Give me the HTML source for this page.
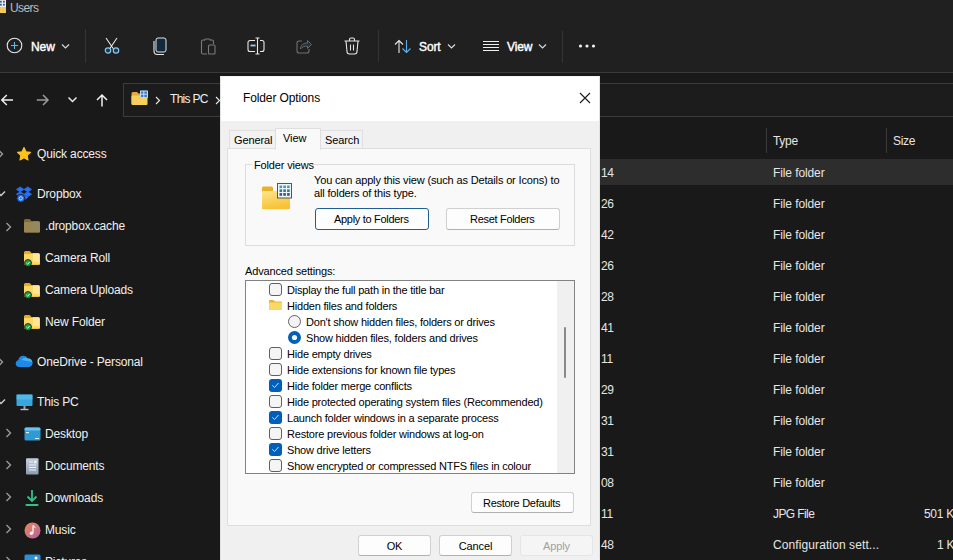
<!DOCTYPE html>
<html><head><meta charset="utf-8">
<style>
*{margin:0;padding:0;box-sizing:border-box}
html,body{width:953px;height:560px;overflow:hidden;background:#191919;font-family:"Liberation Sans",sans-serif}
.a{position:absolute;white-space:nowrap}
#top{position:absolute;left:0;top:0;width:953px;height:72px;background:#202020}
#topline{position:absolute;left:0;top:72px;width:953px;height:1px;background:#3a3a3a}
.wt{color:#ffffff;font-size:12px}
.sep{position:absolute;width:1px;background:#343434}
.nav{position:absolute;left:0;top:73px;width:953px;height:487px;background:#191919}
.side{color:#f0f0f0;font-size:12px;letter-spacing:-0.15px}
.row{position:absolute;left:600px;width:353px;height:26px}
.ct{color:#e6e6e6;font-size:12px}
/* dialog */
#dlg{position:absolute;left:220px;top:76px;width:380px;height:490px;background:#f0f0f0;border:1px solid #8a8a8a;border-bottom:none}
#dtitle{position:absolute;left:0;top:0;width:378px;height:45px;background:#ffffff}
.dt{color:#000;font-size:11px;letter-spacing:-0.15px}
.btn{position:absolute;background:#fdfdfd;border:1px solid #d0d0d0;border-bottom-color:#b5b5b5;border-radius:3px;font-size:11px;color:#000;text-align:center;letter-spacing:-0.15px}
.cb{position:absolute;width:13px;height:13px;border:1px solid #606060;border-radius:3px;background:#f4f4f4}
.cbc{background:#005fb8;border-color:#005fb8}
.li{position:absolute;font-size:11px;color:#000;letter-spacing:-0.2px;white-space:nowrap}
</style></head><body>
<div id="top"></div>
<div id="topline"></div>

<!-- title -->
<svg class="a" style="left:0;top:0" width="8" height="14" viewBox="0 0 8 14">
  <rect x="-6" y="7" width="12" height="6" fill="#f5c85a"/>
  <rect x="-2" y="0" width="8" height="7" fill="#e6edf4"/>
  <rect x="0" y="0.8" width="1.8" height="1.8" fill="#3f5f86"/><rect x="3" y="0.8" width="1.8" height="1.8" fill="#3f5f86"/>
  <rect x="0" y="3.8" width="1.8" height="1.8" fill="#3f5f86"/><rect x="3" y="3.8" width="1.8" height="1.8" fill="#3f5f86"/>
</svg>
<div class="a" style="left:10px;top:1px;font-size:12px;color:#bdbdbd;line-height:14px;letter-spacing:-0.6px">Users</div>

<!-- toolbar -->
<svg class="a" style="left:6px;top:37px" width="18" height="18" viewBox="0 0 18 18">
  <circle cx="8.5" cy="8.5" r="7.3" fill="none" stroke="#e8e8e8" stroke-width="1.1"/>
  <path d="M8.5 5v7M5 8.5h7" stroke="#60b8e8" stroke-width="1.1"/>
</svg>
<div class="a wt" style="left:31px;top:40px;line-height:14px;font-size:12px;letter-spacing:-0.1px;-webkit-text-stroke:0.4px #fff">New</div>
<svg class="a" style="left:61px;top:43px" width="9" height="6" viewBox="0 0 9 6"><path d="M1 1.5l3.5 3.5L8 1.5" fill="none" stroke="#d8d8d8" stroke-width="1.2"/></svg>
<div class="sep" style="left:85px;top:29px;height:34px"></div>

<!-- scissors -->
<svg class="a" style="left:103px;top:37px" width="18" height="18" viewBox="0 0 18 18">
  <path d="M3 1l7.5 11M14 1L6.5 12" stroke="#e8e8e8" stroke-width="1.1" fill="none"/>
  <circle cx="5" cy="13.5" r="2.7" fill="#173a55" stroke="#8cc6ea" stroke-width="1.2"/>
  <circle cx="13" cy="13.5" r="2.7" fill="#173a55" stroke="#8cc6ea" stroke-width="1.2"/>
</svg>
<!-- copy -->
<svg class="a" style="left:152px;top:37px" width="17" height="19" viewBox="0 0 17 19">
  <rect x="4" y="1" width="10" height="14" rx="2" fill="#14293a" stroke="#dce8f0" stroke-width="1"/>
  <path d="M2 4v10a3.5 3.5 0 0 0 3.5 3.5H12" fill="none" stroke="#e8e8e8" stroke-width="1.1"/>
</svg>
<!-- paste (dim) -->
<svg class="a" style="left:200px;top:37px" width="17" height="19" viewBox="0 0 17 19">
  <path d="M5 3H3a1.5 1.5 0 0 0-1.5 1.5v11A1.5 1.5 0 0 0 3 17h4" fill="none" stroke="#7a7a7a" stroke-width="1.1"/>
  <path d="M5 3.5a1 1 0 0 1 1-1.5h3a1 1 0 0 1 1 1.5" fill="none" stroke="#7a7a7a" stroke-width="1.1"/>
  <path d="M10 3h2a1.5 1.5 0 0 1 1.5 1.5V7" fill="none" stroke="#7a7a7a" stroke-width="1.1"/>
  <rect x="8.5" y="8" width="6.5" height="9" rx="1" fill="none" stroke="#7a7a7a" stroke-width="1.1"/>
</svg>
<!-- rename -->
<svg class="a" style="left:247px;top:37px" width="19" height="18" viewBox="0 0 19 18">
  <path d="M8 3.5H3a2 2 0 0 0-2 2v7a2 2 0 0 0 2 2h5M13 3.5h2a2 2 0 0 1 2 2v7a2 2 0 0 1-2 2h-2" fill="none" stroke="#e8e8e8" stroke-width="1.1"/>
  <path d="M3.5 8.5h5" stroke="#9ccfee" stroke-width="1.8"/>
  <path d="M10.5 1v16M8.5 1h4M8.5 17h4" stroke="#dfe9f0" stroke-width="1.1" fill="none"/>
  
</svg>
<!-- share dim -->
<svg class="a" style="left:296px;top:38px" width="17" height="16" viewBox="0 0 17 16">
  <path d="M6 3H3a2 2 0 0 0-2 2v8a2 2 0 0 0 2 2h8a2 2 0 0 0 2-2v-2" fill="none" stroke="#6f6f6f" stroke-width="1.1"/>
  <path d="M4.5 11c0-4 3-6 7-6V2.5l4 4-4 4V8c-3 0-5.5 1-7 3z" fill="#22303a" stroke="#5f6a72" stroke-width="1"/>
</svg>
<!-- trash -->
<svg class="a" style="left:343px;top:37px" width="18" height="18" viewBox="0 0 18 18">
  <path d="M1.5 4h15M6.5 4V2.5a1.5 1.5 0 0 1 1.5-1.5h2a1.5 1.5 0 0 1 1.5 1.5V4M3 4l1 10.5A2.5 2.5 0 0 0 6.5 17h5a2.5 2.5 0 0 0 2.5-2.5L15 4M7.5 7.5v6M10.5 7.5v6" fill="none" stroke="#e8e8e8" stroke-width="1.1"/>
</svg>
<div class="sep" style="left:378px;top:30px;height:32px"></div>
<!-- sort -->
<svg class="a" style="left:394px;top:39px" width="18" height="15" viewBox="0 0 18 15">
  <path d="M5 14V1.5M1 5.5l4-4 4 4" fill="none" stroke="#e8e8e8" stroke-width="1.1"/>
  <path d="M12.5 1v12.5M8.5 9.5l4 4 4-4" fill="none" stroke="#5fb2e6" stroke-width="1.1"/>
</svg>
<div class="a wt" style="left:419px;top:40px;line-height:14px;letter-spacing:-0.1px;-webkit-text-stroke:0.4px #fff">Sort</div>
<svg class="a" style="left:447px;top:43px" width="9" height="6" viewBox="0 0 9 6"><path d="M1 1.5l3.5 3.5L8 1.5" fill="none" stroke="#d8d8d8" stroke-width="1.2"/></svg>
<!-- view -->
<svg class="a" style="left:482px;top:39px" width="18" height="15" viewBox="0 0 18 15">
  <path d="M1 2.5h16M1 5.5h16M1 8.5h16M1 11.5h16" stroke="#f0f0f0" stroke-width="1"/>
</svg>
<div class="a wt" style="left:507px;top:40px;line-height:14px;letter-spacing:-0.1px;-webkit-text-stroke:0.4px #fff">View</div>
<svg class="a" style="left:538px;top:43px" width="9" height="6" viewBox="0 0 9 6"><path d="M1 1.5l3.5 3.5L8 1.5" fill="none" stroke="#d8d8d8" stroke-width="1.2"/></svg>
<div class="sep" style="left:562px;top:31px;height:32px"></div>
<svg class="a" style="left:578px;top:43px" width="18" height="6" viewBox="0 0 18 6">
  <circle cx="2.5" cy="3" r="1.6" fill="#f0f0f0"/><circle cx="9" cy="3" r="1.6" fill="#f0f0f0"/><circle cx="15.5" cy="3" r="1.6" fill="#f0f0f0"/>
</svg>

<!-- nav row -->
<div class="nav"></div>
<svg class="a" style="left:0;top:93px" width="15" height="14" viewBox="0 0 15 14"><path d="M13 7H1.8M6.8 2L1.8 7l5 5" fill="none" stroke="#f0f0f0" stroke-width="1.5"/></svg>
<svg class="a" style="left:35px;top:93px" width="15" height="14" viewBox="0 0 15 14"><path d="M1.8 7H13M8 2l5 5-5 5" fill="none" stroke="#9a9a9a" stroke-width="1.5"/></svg>
<svg class="a" style="left:67px;top:96px" width="11" height="7" viewBox="0 0 11 7"><path d="M1.5 1.5l4 4 4-4" fill="none" stroke="#e8e8e8" stroke-width="1.5"/></svg>
<svg class="a" style="left:95px;top:93px" width="14" height="15" viewBox="0 0 14 15"><path d="M7 13.5V2M2 7l5-5 5 5" fill="none" stroke="#f0f0f0" stroke-width="1.5"/></svg>
<div class="a" style="left:123px;top:83px;width:840px;height:34px;border:1px solid #3c3c3c;background:#1c1c1c"></div>
<svg class="a" style="left:131px;top:90px" width="18" height="16" viewBox="0 0 18 16">
  <path d="M0.5 3.5a1.5 1.5 0 0 1 1.5-1.5h4l1.5 1.5H9V14.5H2a1.5 1.5 0 0 1-1.5-1.5z" fill="#e8a93a"/>
  <rect x="0.5" y="5.5" width="16" height="9.5" rx="1" fill="#f7cf5d"/>
  <rect x="9" y="0.5" width="8" height="7.5" fill="#3d7dc4"/>
  <path d="M9.5 1h7v6.5h-7zM12.8 1v6.5M9.5 4.2h7" fill="none" stroke="#dceeff" stroke-width="0.8"/>
</svg>
<svg class="a" style="left:155px;top:96px" width="6" height="9" viewBox="0 0 6 9"><path d="M1 1l3.5 3.5L1 8" fill="none" stroke="#e8e8e8" stroke-width="1.1"/></svg>
<div class="a" style="left:170px;top:92px;font-size:12px;color:#f0f0f0;line-height:14px;letter-spacing:-0.7px">This PC</div>
<svg class="a" style="left:215px;top:96px" width="6" height="9" viewBox="0 0 6 9"><path d="M1 1l3.5 3.5L1 8" fill="none" stroke="#e8e8e8" stroke-width="1.1"/></svg>

<!-- column header -->
<div class="sep" style="left:766px;top:128px;height:25px;background:#3a3a3a"></div>
<div class="sep" style="left:886px;top:128px;height:25px;background:#3a3a3a"></div>
<div class="a ct" style="left:773px;top:134px;line-height:14px;letter-spacing:-0.3px">Type</div>
<div class="a ct" style="left:893px;top:134px;line-height:14px;letter-spacing:-0.3px">Size</div>

<!-- rows -->
<div class="row" style="top:159px;background:#2d2d2d"></div>
<div class="a ct" style="left:601px;top:166px;line-height:14px;letter-spacing:-0.3px">14</div>
<div class="a ct" style="left:773px;top:166px;line-height:14px;letter-spacing:-0.1px">File folder</div>
<div class="a ct" style="left:601px;top:197px;line-height:14px;letter-spacing:-0.3px">26</div>
<div class="a ct" style="left:773px;top:197px;line-height:14px;letter-spacing:-0.1px">File folder</div>
<div class="a ct" style="left:601px;top:228px;line-height:14px;letter-spacing:-0.3px">42</div>
<div class="a ct" style="left:773px;top:228px;line-height:14px;letter-spacing:-0.1px">File folder</div>
<div class="a ct" style="left:601px;top:259px;line-height:14px;letter-spacing:-0.3px">26</div>
<div class="a ct" style="left:773px;top:259px;line-height:14px;letter-spacing:-0.1px">File folder</div>
<div class="a ct" style="left:601px;top:290px;line-height:14px;letter-spacing:-0.3px">28</div>
<div class="a ct" style="left:773px;top:290px;line-height:14px;letter-spacing:-0.1px">File folder</div>
<div class="a ct" style="left:601px;top:321px;line-height:14px;letter-spacing:-0.3px">41</div>
<div class="a ct" style="left:773px;top:321px;line-height:14px;letter-spacing:-0.1px">File folder</div>
<div class="a ct" style="left:601px;top:352px;line-height:14px;letter-spacing:-0.3px">11</div>
<div class="a ct" style="left:773px;top:352px;line-height:14px;letter-spacing:-0.1px">File folder</div>
<div class="a ct" style="left:601px;top:383px;line-height:14px;letter-spacing:-0.3px">29</div>
<div class="a ct" style="left:773px;top:383px;line-height:14px;letter-spacing:-0.1px">File folder</div>
<div class="a ct" style="left:601px;top:414px;line-height:14px;letter-spacing:-0.3px">31</div>
<div class="a ct" style="left:773px;top:414px;line-height:14px;letter-spacing:-0.1px">File folder</div>
<div class="a ct" style="left:601px;top:445px;line-height:14px;letter-spacing:-0.3px">31</div>
<div class="a ct" style="left:773px;top:445px;line-height:14px;letter-spacing:-0.1px">File folder</div>
<div class="a ct" style="left:601px;top:476px;line-height:14px;letter-spacing:-0.3px">08</div>
<div class="a ct" style="left:773px;top:476px;line-height:14px;letter-spacing:-0.1px">File folder</div>
<div class="a ct" style="left:601px;top:507px;line-height:14px;letter-spacing:-0.3px">11</div>
<div class="a ct" style="left:773px;top:507px;line-height:14px;letter-spacing:-0.6px">JPG File</div>
<div class="a ct" style="left:924px;top:507px;line-height:14px;letter-spacing:-0.3px">501 K</div>
<div class="a ct" style="left:601px;top:538px;line-height:14px;letter-spacing:-0.3px">48</div>
<div class="a ct" style="left:773px;top:538px;line-height:14px;letter-spacing:0.1px">Configuration sett...</div>
<div class="a ct" style="left:937px;top:538px;line-height:14px;letter-spacing:-0.3px">1 K</div>

<!-- sidebar -->
<svg class="a" style="left:-3px;top:149px" width="7" height="10" viewBox="0 0 7 10"><path d="M1.5 1l4 4-4 4" fill="none" stroke="#9a9a9a" stroke-width="1.4"/></svg>
<svg class="a" style="left:16px;top:146px" width="16" height="16" viewBox="0 0 16 16"><path d="M8 1.6l2 4.1 4.5.6-3.3 3.1.8 4.5L8 11.8l-4 2.1.8-4.5L1.5 6.3 6 5.7z" fill="#fbc31c" stroke="#fbc31c" stroke-width="1.1" stroke-linejoin="round"/></svg>
<div class="a side" style="left:37px;top:147px;line-height:14px;">Quick access</div>
<svg class="a" style="left:-4px;top:190px" width="10" height="7" viewBox="0 0 10 7"><path d="M1 1.5l4 4 4-4" fill="none" stroke="#cfcfcf" stroke-width="1.4"/></svg>
<svg class="a" style="left:16px;top:186px" width="17" height="17" viewBox="0 0 17 17"><path d="M4.2 1L0.5 3.4 4.2 5.8 7.9 3.4zM11.8 1L8.1 3.4l3.7 2.4 3.7-2.4zM0.5 8.2l3.7 2.4 3.7-2.4-3.7-2.4zM11.8 5.8L8.1 8.2l3.7 2.4 3.7-2.4zM4.2 11.4l3.8 2.4 3.8-2.4L8 9z" fill="#2a6ff0" stroke="#2a6ff0" stroke-width="0.9" stroke-linejoin="round"/><circle cx="4.8" cy="12.3" r="4" fill="#2a6ff0" stroke="#191919" stroke-width="0.8"/><circle cx="4.8" cy="12.3" r="1.6" fill="none" stroke="#bcd6ff" stroke-width="1"/></svg>
<div class="a side" style="left:37px;top:187px;line-height:14px;">Dropbox</div>
<svg class="a" style="left:5px;top:222px" width="7" height="10" viewBox="0 0 7 10"><path d="M1.5 1l4 4-4 4" fill="none" stroke="#9a9a9a" stroke-width="1.4"/></svg>
<svg class="a" style="left:24px;top:219px" width="16" height="14" viewBox="0 0 16 14"><path d="M0 1.5A1.5 1.5 0 0 1 1.5 0h4l2 2H14.5A1.5 1.5 0 0 1 16 3.5v8.5a1.5 1.5 0 0 1-1.5 1.5h-13A1.5 1.5 0 0 1 0 12z" fill="#7f6c3e"/><rect x="0" y="3" width="16" height="10.5" rx="1" fill="#9a8652"/><rect x="9" y="2" width="6" height="8" fill="#8e8a72" opacity="0.6"/></svg>
<div class="a side" style="left:45px;top:219px;line-height:14px;">.dropbox.cache</div>
<svg class="a" style="left:24px;top:250px" width="17" height="17" viewBox="0 0 17 17"><path d="M0 2.5A1.5 1.5 0 0 1 1.5 1h4l2 2H14.5A1.5 1.5 0 0 1 16 4.5v9a1.5 1.5 0 0 1-1.5 1.5h-13A1.5 1.5 0 0 1 0 13.5z" fill="#e3ad2e"/><rect x="0" y="4" width="16" height="10.5" rx="1" fill="#fbd763"/><rect x="9" y="3" width="6" height="9" fill="#fff3c8" opacity="0.55"/><circle cx="4" cy="13" r="3.5" fill="#1f9e4a" stroke="#191919" stroke-width="0.8"/><path d="M2.4 13l1.2 1.2 2.2-2.3" fill="none" stroke="#fff" stroke-width="0.9"/></svg>
<div class="a side" style="left:45px;top:251px;line-height:14px;">Camera Roll</div>
<svg class="a" style="left:24px;top:282px" width="17" height="17" viewBox="0 0 17 17"><path d="M0 2.5A1.5 1.5 0 0 1 1.5 1h4l2 2H14.5A1.5 1.5 0 0 1 16 4.5v9a1.5 1.5 0 0 1-1.5 1.5h-13A1.5 1.5 0 0 1 0 13.5z" fill="#e3ad2e"/><rect x="0" y="4" width="16" height="10.5" rx="1" fill="#fbd763"/><rect x="9" y="3" width="6" height="9" fill="#fff3c8" opacity="0.55"/><circle cx="4" cy="13" r="3.5" fill="#1f9e4a" stroke="#191919" stroke-width="0.8"/><path d="M2.4 13l1.2 1.2 2.2-2.3" fill="none" stroke="#fff" stroke-width="0.9"/></svg>
<div class="a side" style="left:45px;top:283px;line-height:14px;">Camera Uploads</div>
<svg class="a" style="left:24px;top:314px" width="17" height="17" viewBox="0 0 17 17"><path d="M0 2.5A1.5 1.5 0 0 1 1.5 1h4l2 2H14.5A1.5 1.5 0 0 1 16 4.5v9a1.5 1.5 0 0 1-1.5 1.5h-13A1.5 1.5 0 0 1 0 13.5z" fill="#e3ad2e"/><rect x="0" y="4" width="16" height="10.5" rx="1" fill="#fbd763"/><rect x="9" y="3" width="6" height="9" fill="#fff3c8" opacity="0.55"/><circle cx="4" cy="13" r="3.5" fill="#1f9e4a" stroke="#191919" stroke-width="0.8"/><path d="M2.4 13l1.2 1.2 2.2-2.3" fill="none" stroke="#fff" stroke-width="0.9"/></svg>
<div class="a side" style="left:45px;top:315px;line-height:14px;">New Folder</div>
<svg class="a" style="left:-3px;top:357px" width="7" height="10" viewBox="0 0 7 10"><path d="M1.5 1l4 4-4 4" fill="none" stroke="#9a9a9a" stroke-width="1.4"/></svg>
<svg class="a" style="left:15px;top:354px" width="18" height="14" viewBox="0 0 18 14"><path d="M4 13a3.5 3.5 0 0 1-.6-6.9A5 5 0 0 1 12.9 4.6 4.2 4.2 0 0 1 14 13z" fill="#1d8ae6"/><path d="M6.5 6a5 5 0 0 1 6.4-1.4 4 4 0 0 1 4.2 3.4" fill="#4db0f5"/></svg>
<div class="a side" style="left:37px;top:355px;line-height:14px;">OneDrive - Personal</div>
<svg class="a" style="left:-4px;top:398px" width="10" height="7" viewBox="0 0 10 7"><path d="M1 1.5l4 4 4-4" fill="none" stroke="#cfcfcf" stroke-width="1.4"/></svg>
<svg class="a" style="left:16px;top:394px" width="17" height="17" viewBox="0 0 17 17"><rect x="0.5" y="0.5" width="16" height="11.5" rx="1" fill="#39a6dd"/><rect x="0.5" y="0.5" width="16" height="5" fill="#5fc6f0" opacity="0.6"/><rect x="7.5" y="12" width="2" height="3" fill="#9aa4ad"/><rect x="4.5" y="14.8" width="8" height="1.4" fill="#b6bec6"/></svg>
<div class="a side" style="left:37px;top:395px;line-height:14px;">This PC</div>
<svg class="a" style="left:5px;top:428px" width="7" height="10" viewBox="0 0 7 10"><path d="M1.5 1l4 4-4 4" fill="none" stroke="#9a9a9a" stroke-width="1.4"/></svg>
<svg class="a" style="left:24px;top:427px" width="17" height="14" viewBox="0 0 17 14"><rect x="0.5" y="0.5" width="16" height="13" rx="1.5" fill="#2f9ad6"/><rect x="0.5" y="0.5" width="16" height="3" rx="1.5" fill="#69c4ef"/><rect x="2" y="5" width="3" height="1.2" fill="#dff3ff"/><rect x="11" y="11" width="4" height="1" fill="#dff3ff"/></svg>
<div class="a side" style="left:45px;top:427px;line-height:14px;">Desktop</div>
<svg class="a" style="left:5px;top:460px" width="7" height="10" viewBox="0 0 7 10"><path d="M1.5 1l4 4-4 4" fill="none" stroke="#9a9a9a" stroke-width="1.4"/></svg>
<svg class="a" style="left:26px;top:458px" width="13" height="17" viewBox="0 0 13 17"><defs><linearGradient id="dg" x1="0" y1="0" x2="0" y2="1"><stop offset="0" stop-color="#c3cedb"/><stop offset="1" stop-color="#8a9cb2"/></linearGradient></defs><rect x="0" y="0.3" width="12.5" height="16.2" rx="1" fill="url(#dg)"/><path d="M3 4h4M3 7h7M3 9.5h7M3 12h7" stroke="#eef3f8" stroke-width="1"/><rect x="8" y="2.8" width="2.5" height="2.5" fill="#eef3f8"/></svg>
<div class="a side" style="left:45px;top:459px;line-height:14px;">Documents</div>
<svg class="a" style="left:5px;top:492px" width="7" height="10" viewBox="0 0 7 10"><path d="M1.5 1l4 4-4 4" fill="none" stroke="#9a9a9a" stroke-width="1.4"/></svg>
<svg class="a" style="left:25px;top:489px" width="14" height="18" viewBox="0 0 14 18"><path d="M7 1v10.5M2.5 7.5L7 12l4.5-4.5" fill="none" stroke="#33c08a" stroke-width="1.8"/><rect x="0.5" y="15" width="13" height="2" rx="0.8" fill="#33c08a"/></svg>
<div class="a side" style="left:45px;top:491px;line-height:14px;">Downloads</div>
<svg class="a" style="left:5px;top:524px" width="7" height="10" viewBox="0 0 7 10"><path d="M1.5 1l4 4-4 4" fill="none" stroke="#9a9a9a" stroke-width="1.4"/></svg>
<svg class="a" style="left:24px;top:522px" width="17" height="17" viewBox="0 0 17 17"><defs><linearGradient id="mg" x1="0" y1="0" x2="1" y2="1"><stop offset="0" stop-color="#e98a5a"/><stop offset="1" stop-color="#b8609e"/></linearGradient></defs><circle cx="8.5" cy="8.5" r="8" fill="url(#mg)"/><path d="M9 3.5v7.5" stroke="#fff" stroke-width="1.2"/><circle cx="7.4" cy="11.3" r="1.7" fill="#fff"/><path d="M9 3.5c1 .6 2 1.3 2 2.6" fill="none" stroke="#fff" stroke-width="1"/></svg>
<div class="a side" style="left:45px;top:523px;line-height:14px;">Music</div>
<svg class="a" style="left:5px;top:556px" width="7" height="10" viewBox="0 0 7 10"><path d="M1.5 1l4 4-4 4" fill="none" stroke="#9a9a9a" stroke-width="1.4"/></svg>
<svg class="a" style="left:24px;top:554px" width="17" height="15" viewBox="0 0 17 15"><rect x="0.5" y="0.5" width="16" height="14" rx="1.5" fill="#2f8fd6"/><circle cx="12" cy="4" r="1.5" fill="#fff"/></svg>
<div class="a side" style="left:45px;top:555px;line-height:14px;">Pictures</div>

<!-- dialog -->
<div class="a" style="left:220px;top:76px;width:380px;height:490px;background:#f0f0f0;border:1px solid #e2e2e2;border-top-color:#f4f4f4"></div>
<div class="a" style="left:221px;top:77px;width:378px;height:44px;background:#ffffff"></div>
<div class="a" style="left:243px;top:91px;line-height:14px;font-size:12px;letter-spacing:-0.12px;color:#000;">Folder Options</div>
<svg class="a" style="left:579px;top:92px" width="12" height="12" viewBox="0 0 12 12"><path d="M1 1l10 10M11 1L1 11" stroke="#1a1a1a" stroke-width="1.1"/></svg>
<div class="a" style="left:229px;top:130px;width:47px;height:19px;background:#f2f2f2;border:1px solid #e0e0e0;border-bottom:none"></div>
<div class="a" style="left:320px;top:130px;width:43px;height:19px;background:#f2f2f2;border:1px solid #e0e0e0;border-bottom:none"></div>
<div class="a" style="left:227px;top:148px;width:364px;height:378px;background:#f9f9f9;border:1px solid #dedede"></div>
<div class="a" style="left:275px;top:128px;width:46px;height:22px;background:#f9f9f9;border:1px solid #dedede;border-bottom:none"></div>
<div class="a" style="left:234px;top:133px;line-height:14px;font-size:11px;letter-spacing:-0.1px;color:#000;">General</div>
<div class="a" style="left:283px;top:131px;line-height:14px;font-size:11px;letter-spacing:-0.1px;color:#000;">View</div>
<div class="a" style="left:325px;top:133px;line-height:14px;font-size:11px;letter-spacing:-0.1px;color:#000;">Search</div>
<div class="a" style="left:245px;top:164px;width:330px;height:82px;border:1px solid #dcdcdc"></div>
<div class="a" style="left:252px;top:160px;width:62px;height:8px;background:#f9f9f9"></div>
<div class="a" style="left:254px;top:158px;line-height:14px;font-size:11px;letter-spacing:-0.15px;color:#000;">Folder views</div>
<svg class="a" style="left:261px;top:182px" width="32" height="29" viewBox="0 0 32 29"><defs><linearGradient id="fg" x1="0" y1="0" x2="0.3" y2="1"><stop offset="0" stop-color="#fde58e"/><stop offset="1" stop-color="#f7c235"/></linearGradient><linearGradient id="gg" x1="0" y1="0" x2="0" y2="1"><stop offset="0" stop-color="#52a8a8"/><stop offset="1" stop-color="#4b3f8a"/></linearGradient></defs><rect x="1" y="4.5" width="11" height="6" rx="1.5" fill="#eab124"/><rect x="1" y="9" width="28" height="18.3" rx="1" fill="url(#fg)"/><rect x="16.5" y="1.5" width="14" height="14.5" fill="#eaf6f8" stroke="#555" stroke-width="1"/><path d="M18.5 3.5h2.6v2.6h-2.6zM22.3 3.5h2.6v2.6h-2.6zM26.1 3.5h2.6v2.6h-2.6zM18.5 7.3h2.6v2.6h-2.6zM22.3 7.3h2.6v2.6h-2.6zM26.1 7.3h2.6v2.6h-2.6zM18.5 11.1h2.6v2.6h-2.6zM22.3 11.1h2.6v2.6h-2.6zM26.1 11.1h2.6v2.6h-2.6z" fill="url(#gg)"/></svg>
<div class="a" style="left:314px;top:173px;line-height:14px;font-size:11px;letter-spacing:-0.15px;color:#000;">You can apply this view (such as Details or Icons) to</div>
<div class="a" style="left:314px;top:186px;line-height:14px;font-size:11px;letter-spacing:-0.15px;color:#000;">all folders of this type.</div>
<div class="a" style="left:315px;top:208px;width:114px;height:22px;background:#fdfdfd;border:1px solid #1f5e94;border-radius:3px"></div>
<div class="a" style="left:334px;top:212px;line-height:14px;font-size:11px;letter-spacing:-0.3px;color:#000;">Apply to Folders</div>
<div class="a" style="left:446px;top:208px;width:114px;height:22px;background:#fdfdfd;border:1px solid #d0d0d0;border-bottom-color:#b0b0b0;border-radius:3px"></div>
<div class="a" style="left:470px;top:212px;line-height:14px;font-size:11px;letter-spacing:-0.3px;color:#000;">Reset Folders</div>
<div class="a" style="left:245px;top:264px;line-height:14px;font-size:11px;letter-spacing:-0.15px;color:#000;">Advanced settings:</div>
<div class="a" style="left:245px;top:280px;width:330px;height:194px;background:#ffffff;border:1px solid #828282"></div>
<div class="a" style="left:557px;top:281px;width:17px;height:192px;background:#f0f0f0"></div>
<div class="a" style="left:564px;top:327px;width:2px;height:51px;background:#8a8a8a;border-radius:1px"></div>
<div class="a" style="left:269px;top:283px;width:13px;height:13px;border:1px solid #606060;border-radius:3px;background:#f5f5f5"></div>
<div class="a" style="left:287px;top:283px;line-height:14px;font-size:11px;letter-spacing:-0.2px;color:#000;">Display the full path in the title bar</div>
<svg class="a" style="left:269px;top:300px" width="13" height="10" viewBox="0 0 13 10"><path d="M0 1a1 1 0 0 1 1-1h3.5l1.5 1.5H12a1 1 0 0 1 1 1V9a1 1 0 0 1-1 1H1a1 1 0 0 1-1-1z" fill="#e6b43a"/><rect x="0" y="2.5" width="13" height="7.5" rx="0.6" fill="#fbd765"/></svg>
<div class="a" style="left:287px;top:299px;line-height:14px;font-size:11px;letter-spacing:-0.2px;color:#000;">Hidden files and folders</div>
<svg class="a" style="left:288px;top:315px" width="13" height="13" viewBox="0 0 13 13"><circle cx="6.5" cy="6.5" r="6" fill="#f3f3f3" stroke="#606060" stroke-width="1"/></svg>
<div class="a" style="left:306px;top:315px;line-height:14px;font-size:11px;letter-spacing:-0.2px;color:#000;">Don't show hidden files, folders or drives</div>
<svg class="a" style="left:288px;top:331px" width="13" height="13" viewBox="0 0 13 13"><circle cx="6.5" cy="6.5" r="6.5" fill="#005fb8"/><circle cx="6.5" cy="6.5" r="2.6" fill="#eef8ff"/></svg>
<div class="a" style="left:306px;top:331px;line-height:14px;font-size:11px;letter-spacing:-0.2px;color:#000;">Show hidden files, folders and drives</div>
<div class="a" style="left:269px;top:347px;width:13px;height:13px;border:1px solid #606060;border-radius:3px;background:#f5f5f5"></div>
<div class="a" style="left:287px;top:347px;line-height:14px;font-size:11px;letter-spacing:-0.2px;color:#000;">Hide empty drives</div>
<div class="a" style="left:269px;top:363px;width:13px;height:13px;border:1px solid #606060;border-radius:3px;background:#f5f5f5"></div>
<div class="a" style="left:287px;top:363px;line-height:14px;font-size:11px;letter-spacing:-0.2px;color:#000;">Hide extensions for known file types</div>
<svg class="a" style="left:269px;top:379px" width="13" height="13" viewBox="0 0 13 13"><rect x="0" y="0" width="13" height="13" rx="3" fill="#005fb8"/><path d="M3.3 6.3l2.2 2.2L9.6 4" fill="none" stroke="#e6f0fa" stroke-width="0.9"/></svg>
<div class="a" style="left:287px;top:379px;line-height:14px;font-size:11px;letter-spacing:-0.2px;color:#000;">Hide folder merge conflicts</div>
<div class="a" style="left:269px;top:395px;width:13px;height:13px;border:1px solid #606060;border-radius:3px;background:#f5f5f5"></div>
<div class="a" style="left:287px;top:395px;line-height:14px;font-size:11px;letter-spacing:-0.2px;color:#000;">Hide protected operating system files (Recommended)</div>
<svg class="a" style="left:269px;top:411px" width="13" height="13" viewBox="0 0 13 13"><rect x="0" y="0" width="13" height="13" rx="3" fill="#005fb8"/><path d="M3.3 6.3l2.2 2.2L9.6 4" fill="none" stroke="#e6f0fa" stroke-width="0.9"/></svg>
<div class="a" style="left:287px;top:411px;line-height:14px;font-size:11px;letter-spacing:-0.2px;color:#000;">Launch folder windows in a separate process</div>
<div class="a" style="left:269px;top:427px;width:13px;height:13px;border:1px solid #606060;border-radius:3px;background:#f5f5f5"></div>
<div class="a" style="left:287px;top:427px;line-height:14px;font-size:11px;letter-spacing:-0.2px;color:#000;">Restore previous folder windows at log-on</div>
<svg class="a" style="left:269px;top:443px" width="13" height="13" viewBox="0 0 13 13"><rect x="0" y="0" width="13" height="13" rx="3" fill="#005fb8"/><path d="M3.3 6.3l2.2 2.2L9.6 4" fill="none" stroke="#e6f0fa" stroke-width="0.9"/></svg>
<div class="a" style="left:287px;top:443px;line-height:14px;font-size:11px;letter-spacing:-0.2px;color:#000;">Show drive letters</div>
<div class="a" style="left:269px;top:459px;width:13px;height:13px;border:1px solid #606060;border-radius:3px;background:#f5f5f5"></div>
<div class="a" style="left:287px;top:459px;line-height:14px;font-size:11px;letter-spacing:-0.2px;color:#000;">Show encrypted or compressed NTFS files in colour</div>
<div class="a" style="left:471px;top:492px;width:103px;height:21px;background:#fdfdfd;border:1px solid #d0d0d0;border-bottom-color:#b0b0b0;border-radius:3px"></div>
<div class="a" style="left:483px;top:496px;line-height:14px;font-size:11px;letter-spacing:-0.3px;color:#000;">Restore Defaults</div>
<div class="a" style="left:358px;top:535px;width:73px;height:21px;background:#fdfdfd;border:1px solid #d0d0d0;border-bottom-color:#b0b0b0;border-radius:3px"></div>
<div class="a" style="left:358px;top:539px;width:73px;text-align:center;line-height:14px;font-size:11px;letter-spacing:-0.1px;color:#000">OK</div>
<div class="a" style="left:439px;top:535px;width:73px;height:21px;background:#fdfdfd;border:1px solid #d0d0d0;border-bottom-color:#b0b0b0;border-radius:3px"></div>
<div class="a" style="left:439px;top:539px;width:73px;text-align:center;line-height:14px;font-size:11px;letter-spacing:-0.1px;color:#000">Cancel</div>
<div class="a" style="left:520px;top:535px;width:73px;height:21px;background:#f5f5f5;border:1px solid #e5e5e5;border-radius:3px"></div>
<div class="a" style="left:520px;top:539px;width:73px;text-align:center;line-height:14px;font-size:11px;letter-spacing:-0.1px;color:#a0a0a0">Apply</div>
</body></html>
